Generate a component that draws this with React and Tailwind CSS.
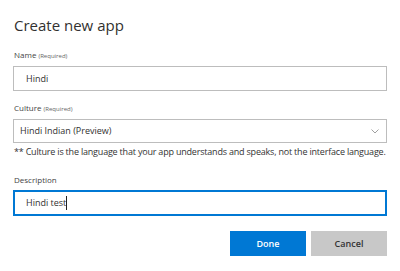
import React from 'react';

const FieldLabel = ({ text, required }) => (
  <div className="h-[11px] pl-[1px] flex items-baseline gap-[2px] text-[8px] leading-[11px] text-[#444]">
    <span>{text}</span>
    {required && <span className="text-[6px] leading-[11px] text-[#666]">(Required)</span>}
  </div>
);

const CreateAppDialog = () => {
  return (
    <div className="w-[400px] h-[271px] bg-white px-[13px] pt-[15px] text-[#323130]" style={{ fontFamily: '"Open Sans", "Noto Sans", sans-serif' }}>
      <h1 className="h-[20px] text-[15px] leading-[20px] font-normal pl-[1px]">Create new app</h1>

      <div className="mt-[14px]">
        <FieldLabel text="Name" required />
      </div>
      <div className="mt-[6px] h-[25px] border border-[#bdbdbd] flex items-center pl-[12px] text-[9px]">
        Hindi
      </div>

      <div className="mt-[11px]">
        <FieldLabel text="Culture" required />
      </div>
      <div className="mt-[6px] h-[24px] border border-[#bdbdbd] flex items-center justify-between pl-[6px] pr-[7px] text-[9px]">
        <span>Hindi Indian (Preview)</span>
        <svg width="8" height="5" viewBox="0 0 8 5" fill="none">
          <path d="M0.5 0.5 L4 4 L7.5 0.5" stroke="#888" strokeWidth="0.8" />
        </svg>
      </div>
      <p className="mt-[3px] h-[12px] pl-[1px] text-[9px] leading-[12px] tracking-[-0.2px] text-[#333] whitespace-nowrap">
        ** Culture is the language that your app understands and speaks, not the interface language.
      </p>

      <div className="mt-[16px]">
        <FieldLabel text="Description" />
      </div>
      <div className="mt-[5px] h-[26px] border-2 border-[#0078d4] flex items-center pl-[11px] text-[9px]">
        <span>Hindi test</span>
        <span className="w-[1px] h-[14px] bg-[#222]" />
      </div>

      <div className="mt-[15px] flex justify-end gap-[5px]">
        <button className="w-[76px] h-[25px] bg-[#0078d4] text-white text-[9px] font-semibold">Done</button>
        <button className="w-[76px] h-[25px] bg-[#c8c8c8] text-[#333] text-[9px] font-semibold">Cancel</button>
      </div>
    </div>
  );
};

export default CreateAppDialog;
